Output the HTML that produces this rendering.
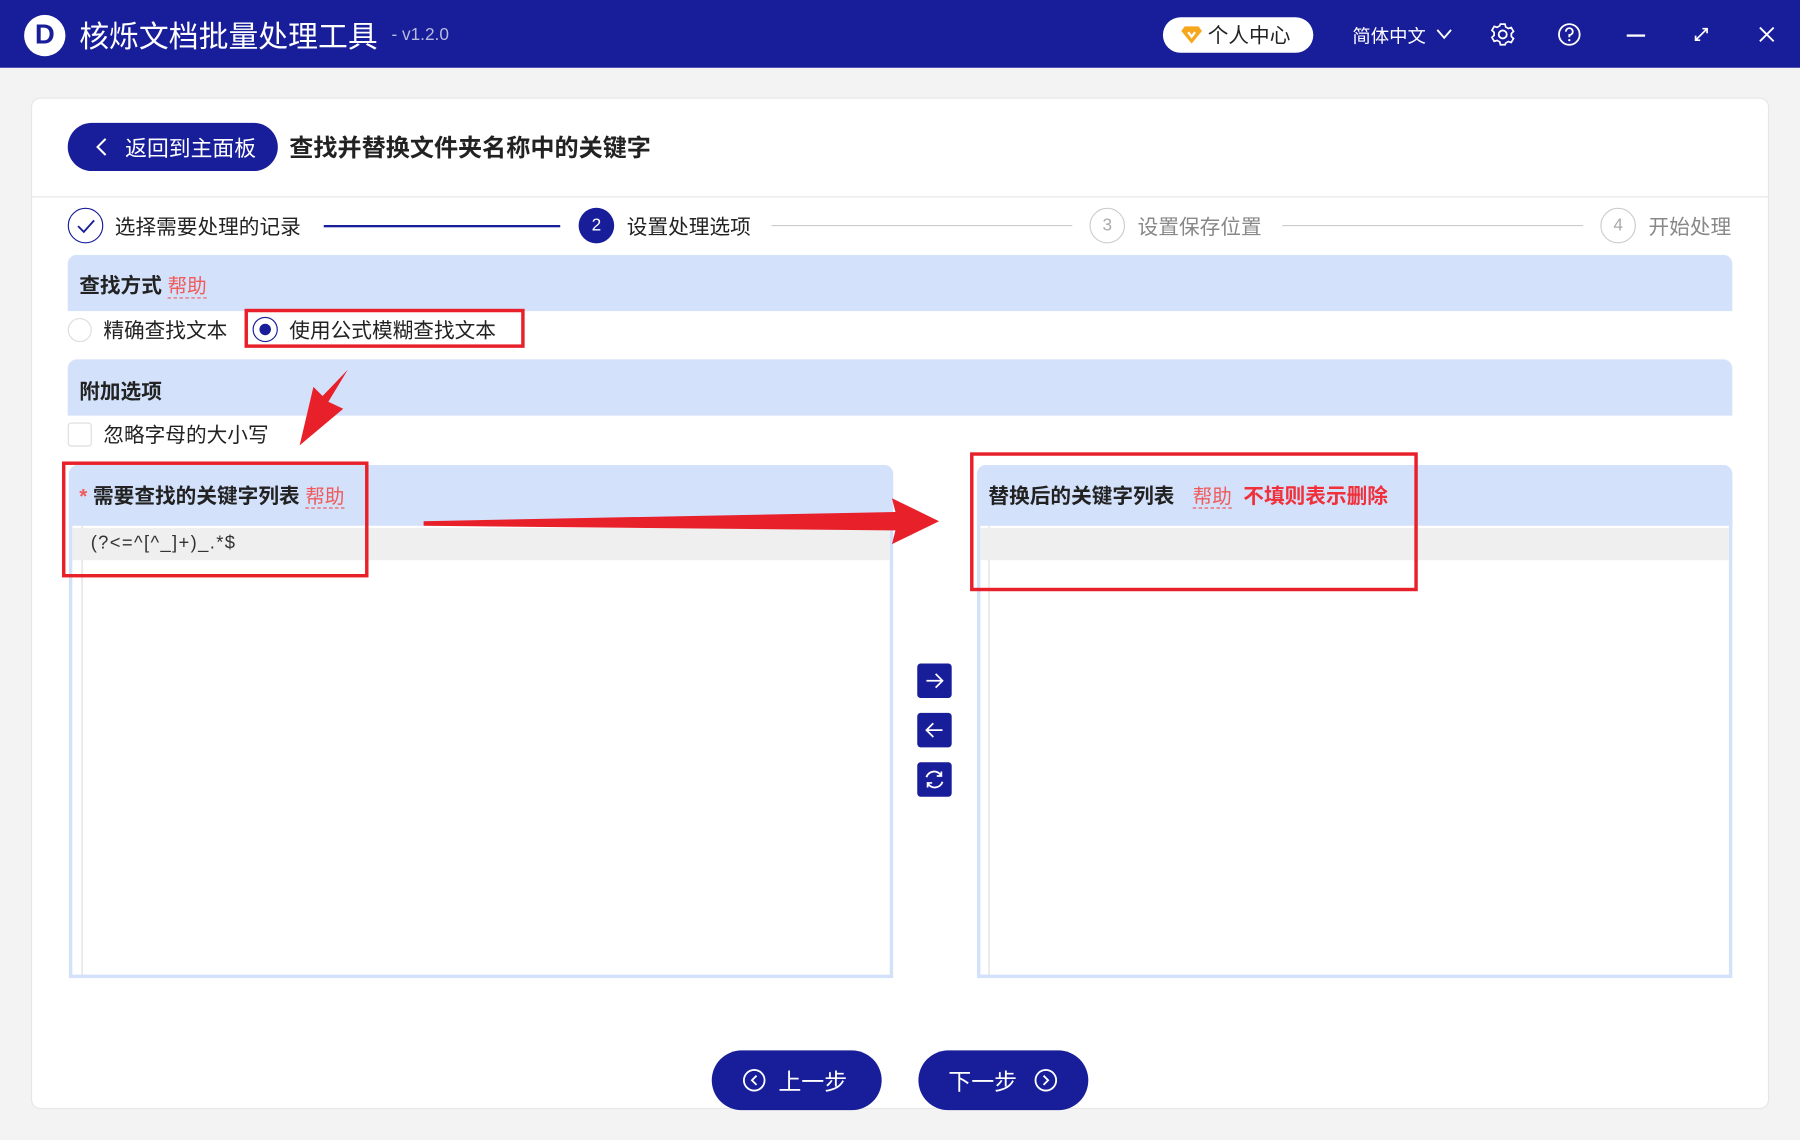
<!DOCTYPE html>
<html><head><meta charset="utf-8"><style>
*{margin:0;padding:0;box-sizing:border-box}
html,body{width:1800px;height:1140px;overflow:hidden;background:#f3f3f3}
#w{position:absolute;left:0;top:0;width:1568px;height:993px;transform:scale(1.148);transform-origin:0 0;font-family:"Liberation Sans","Noto Sans CJK SC",sans-serif;color:#222}
.a{position:absolute}
.tb{left:0;top:0;width:1568px;height:59px;background:#181d99}
.card{left:27px;top:85px;width:1514px;height:881px;background:#fff;border:1px solid #e6e6e6;border-radius:8px}
.hd{background:#d3e1fb;border-radius:8px 8px 0 0}
.bt{width:30px;height:30px;background:#181d99;border-radius:3px}
.red{border:3px solid #e8202a}
.circ{border-radius:50%;width:31px;height:31px;text-align:center;line-height:29px;font-size:15px}
.hl{font-weight:normal;color:#f05a5a;border-bottom:1px dashed #f05a5a}
</style></head><body><div id="w">
<div class="a tb"></div>
<div class="a" style="left:21px;top:13px;width:36px;height:36px;border-radius:50%;background:#fff"></div>
<div class="a" style="left:21px;top:13px;width:36px;height:36px;text-align:center;line-height:36px;font-weight:bold;font-size:24px;color:#181d99">D</div>
<div class="a" style="left:69px;top:12px;font-size:26px;color:#fff">核烁文档批量处理工具</div>
<div class="a" style="left:341px;top:22px;font-size:15px;color:#b8bbe0">- v1.2.0</div>
<div class="a" style="left:1013px;top:15px;width:131px;height:31px;border-radius:16px;background:#fff"></div>
<svg class="a" style="left:1029px;top:22px" width="18" height="16" viewBox="0 0 18 16"><path d="M3 1h12l3 4-9 11L0 5z" fill="#f6a71b"/><path d="M6 6l3 4 3-4" stroke="#fff" stroke-width="2" fill="none"/></svg>
<div class="a" style="left:1052px;top:17px;font-size:18px">个人中心</div>
<div class="a" style="left:1178px;top:18px;font-size:16px;color:#fff">简体中文</div>
<svg class="a" style="left:1250px;top:24px" width="16" height="12"><path d="M2 2l6 7 6-7" stroke="#fff" stroke-width="1.6" fill="none"/></svg>
<svg class="a" style="left:1298px;top:19px" width="22" height="22" viewBox="0 0 22 22"><circle cx="11" cy="11" r="3.5" stroke="#fff" stroke-width="1.6" fill="none"/><path d="M9 2h4l.6 2.5 2.3 1.3 2.5-.8 2 3.4-1.9 1.8v2.6l1.9 1.8-2 3.4-2.5-.8-2.3 1.3L13 20H9l-.6-2.5-2.3-1.3-2.5.8-2-3.4 1.9-1.8V9.2L1.6 7.4l2-3.4 2.5.8 2.3-1.3z" stroke="#fff" stroke-width="1.5" fill="none"/></svg>
<svg class="a" style="left:1356px;top:19px" width="22" height="22"><circle cx="11" cy="11" r="9" stroke="#fff" stroke-width="1.6" fill="none"/><path d="M8 8.5a3 3 0 1 1 3 3v2" stroke="#fff" stroke-width="1.6" fill="none"/><circle cx="11" cy="16" r="1" fill="#fff"/></svg>
<div class="a" style="left:1417px;top:30px;width:16px;height:1.6px;background:#fff"></div>
<svg class="a" style="left:1474px;top:22px" width="16" height="16"><path d="M3 13l10-10M9 3h4v4M3 9v4h4" stroke="#fff" stroke-width="1.5" fill="none"/></svg>
<svg class="a" style="left:1531px;top:22px" width="16" height="16"><path d="M2 2l12 12M14 2L2 14" stroke="#fff" stroke-width="1.6"/></svg>

<div class="a card"></div>
<div class="a" style="left:59px;top:107px;width:183px;height:42px;border-radius:21px;background:#181d99"></div>
<svg class="a" style="left:82px;top:119px" width="14" height="18"><path d="M10 2L3 9l7 7" stroke="#fff" stroke-width="1.8" fill="none"/></svg>
<div class="a" style="left:109px;top:115px;font-size:19px;color:#fff">返回到主面板</div>
<div class="a" style="left:252px;top:113px;font-size:21px;font-weight:bold">查找并替换文件夹名称中的关键字</div>
<div class="a" style="left:28px;top:171px;width:1512px;height:1px;background:#e6e6e6"></div>

<div class="a circ" style="left:59px;top:181px;border:1.5px solid #181d99"></div>
<svg class="a" style="left:66px;top:189px" width="18" height="16"><path d="M2 8l5 5 9-10" stroke="#181d99" stroke-width="1.6" fill="none"/></svg>
<div class="a" style="left:100px;top:184px;font-size:18px">选择需要处理的记录</div>
<div class="a" style="left:282px;top:196px;width:206px;height:2px;background:#181d99"></div>
<div class="a circ" style="left:504px;top:181px;background:#181d99;color:#fff;line-height:31px">2</div>
<div class="a" style="left:546px;top:184px;font-size:18px">设置处理选项</div>
<div class="a" style="left:672px;top:196px;width:262px;height:1px;background:#ccc"></div>
<div class="a circ" style="left:949px;top:181px;border:1.5px solid #ccc;color:#aaa">3</div>
<div class="a" style="left:991px;top:184px;font-size:18px;color:#888">设置保存位置</div>
<div class="a" style="left:1117px;top:196px;width:262px;height:1px;background:#ccc"></div>
<div class="a circ" style="left:1394px;top:181px;border:1.5px solid #ccc;color:#aaa">4</div>
<div class="a" style="left:1436px;top:184px;font-size:18px;color:#888">开始处理</div>

<div class="a hd" style="left:59px;top:222px;width:1450px;height:49px"></div>
<div class="a" style="left:69px;top:235px;font-size:18px;font-weight:bold">查找方式 <span class="hl" style="font-size:17px">帮助</span></div>
<div class="a" style="left:59px;top:277px;width:21px;height:21px;border-radius:50%;border:1px solid #ddd"></div>
<div class="a" style="left:90px;top:274px;font-size:18px">精确查找文本</div>
<div class="a" style="left:220px;top:276px;width:22px;height:22px;border-radius:50%;border:1.5px solid #181d99"></div>
<div class="a" style="left:226px;top:282px;width:10px;height:10px;border-radius:50%;background:#181d99"></div>
<div class="a" style="left:252px;top:274px;font-size:18px">使用公式模糊查找文本</div>
<div class="a red" style="left:213px;top:269px;width:244px;height:34px"></div>

<div class="a hd" style="left:59px;top:313px;width:1450px;height:49px"></div>
<div class="a" style="left:69px;top:327px;font-size:18px;font-weight:bold">附加选项</div>
<div class="a" style="left:59px;top:368px;width:21px;height:21px;border-radius:3px;border:1px solid #ddd"></div>
<div class="a" style="left:90px;top:365px;font-size:18px">忽略字母的大小写</div>

<div class="a" style="left:60px;top:405px;width:718px;height:447px;border:3px solid #d3e1fb;border-radius:8px 8px 0 0"></div>
<div class="a hd" style="left:60px;top:405px;width:718px;height:53px"></div>
<div class="a" style="left:71px;top:458px;width:1px;height:392px;background:#ddd"></div>
<div class="a" style="left:63px;top:460px;width:712px;height:28px;background:#efefef"></div>
<div class="a" style="left:69px;top:418px;font-size:18px;font-weight:bold"><span style="color:#f05a5a">*</span> 需要查找的关键字列表 <span class="hl" style="font-size:17px">帮助</span></div>
<div class="a" style="left:79px;top:465px;font-size:16px;color:#333;letter-spacing:1.2px">(?&lt;=^[^_]+)_.*$</div>
<div class="a red" style="left:54px;top:402px;width:267px;height:101px"></div>

<div class="a" style="left:851px;top:405px;width:658px;height:447px;border:3px solid #d3e1fb;border-radius:8px 8px 0 0"></div>
<div class="a hd" style="left:851px;top:405px;width:658px;height:53px"></div>
<div class="a" style="left:861px;top:458px;width:1px;height:392px;background:#ddd"></div>
<div class="a" style="left:854px;top:460px;width:652px;height:28px;background:#efefef"></div>
<div class="a" style="left:861px;top:418px;font-size:18px;font-weight:bold">替换后的关键字列表<span class="hl" style="margin-left:16px;font-size:17px">帮助</span><span style="color:#f0303a;margin-left:10px">不填则表示删除</span></div>
<div class="a red" style="left:845px;top:394px;width:390px;height:121px"></div>

<div class="a bt" style="left:799px;top:578px"></div>
<svg class="a" style="left:799px;top:578px" width="30" height="30"><path d="M8 15h14M16 9l6 6-6 6" stroke="#fff" stroke-width="1.5" fill="none"/></svg>
<div class="a bt" style="left:799px;top:621px"></div>
<svg class="a" style="left:799px;top:621px" width="30" height="30"><path d="M22 15H8M14 9l-6 6 6 6" stroke="#fff" stroke-width="1.5" fill="none"/></svg>
<div class="a bt" style="left:799px;top:664px"></div>
<svg class="a" style="left:799px;top:664px" width="30" height="30"><path d="M21 12a7 7 0 0 0-13 1M9 18a7 7 0 0 0 13-1" stroke="#fff" stroke-width="1.6" fill="none"/><path d="M21 8v4h-4M9 22v-4h4" stroke="#fff" stroke-width="1.5" fill="none"/></svg>

<div class="a" style="left:620px;top:915px;width:148px;height:52px;border-radius:26px;background:#181d99"></div>
<svg class="a" style="left:646px;top:930px" width="22" height="22"><circle cx="11" cy="11" r="9" stroke="#fff" stroke-width="1.6" fill="none"/><path d="M13 7l-4 4 4 4" stroke="#fff" stroke-width="1.6" fill="none"/></svg>
<div class="a" style="left:678px;top:926px;font-size:20px;color:#fff">上一步</div>
<div class="a" style="left:800px;top:915px;width:148px;height:52px;border-radius:26px;background:#181d99"></div>
<div class="a" style="left:826px;top:926px;font-size:20px;color:#fff">下一步</div>
<svg class="a" style="left:900px;top:930px" width="22" height="22"><circle cx="11" cy="11" r="9" stroke="#fff" stroke-width="1.6" fill="none"/><path d="M9 7l4 4-4 4" stroke="#fff" stroke-width="1.6" fill="none"/></svg>

<svg class="a" style="left:0;top:0" width="1568" height="993">
<polygon points="303,322 286,350 299,356 261,388 273,337 281,345" fill="#e8202a"/>
<polygon points="369,454 780,446 777,434 818,454 777,474 780,462 369,458" fill="#e8202a"/>
</svg>
</div></body></html>
